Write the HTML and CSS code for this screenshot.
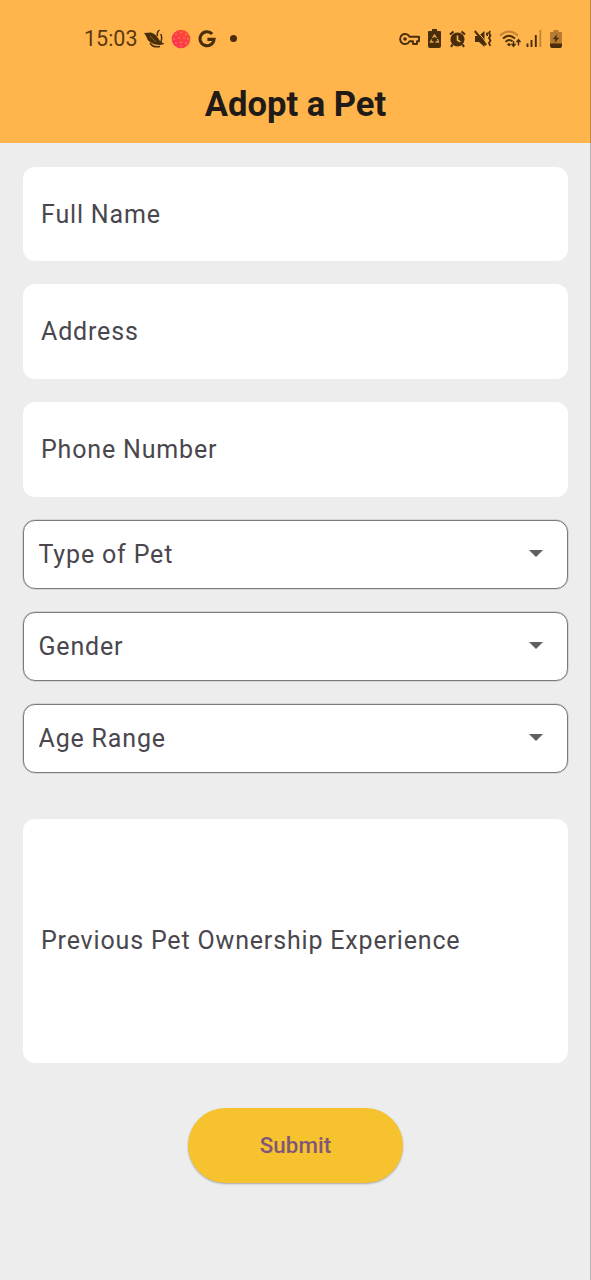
FILE: index.html
```html
<!DOCTYPE html>
<html lang="en">
<head>
<meta charset="utf-8">
<title>Adopt a Pet</title>
<link rel="stylesheet" href="styles.css">
</head>
<body>
<div class="screen">
  <header class="app-header">
    <div class="status-bar">
      <div class="status-left">
        <span class="clock">15:03</span>
        <svg class="icon-bird" width="22" height="22" viewBox="0 0 22 22"><path fill="#4a2e0b" d="M0 5 L7 4.5 Q12 6 14 10 L16 13 L20.5 16 L16 17 Q10 17 6 14 Q3 12 2.5 9 Q1.5 7 0 5Z"/><path d="M15.5 2 Q12.5 4 13.5 8 M17 6 Q18.5 10 17 14 M6 15 Q9 20 16 18.5" fill="none" stroke="#4a2e0b" stroke-width="1.5"/><path d="M6 8 L12 14" stroke="#a06c2b" stroke-width=".8"/></svg>
        <svg class="icon-ball" width="20" height="20" viewBox="0 0 20 20"><defs><linearGradient id="ball" x1="0" y1="1" x2="1" y2="0"><stop offset="0" stop-color="#fb2e58"/><stop offset="1" stop-color="#fb5030"/></linearGradient></defs><circle cx="10" cy="10" r="9.3" fill="url(#ball)"/><g fill="#ff8d50"><circle cx="10" cy="3.5" r=".8"/><circle cx="5" cy="5.5" r=".8"/><circle cx="15" cy="5.5" r=".8"/><circle cx="3" cy="10" r=".8"/><circle cx="8" cy="9" r=".8"/><circle cx="13" cy="9" r=".8"/><circle cx="17" cy="10" r=".8"/><circle cx="5" cy="14" r=".8"/><circle cx="10" cy="13.5" r=".8"/><circle cx="15" cy="14" r=".8"/><circle cx="10" cy="17" r=".8"/></g></svg>
        <svg class="icon-g" width="18" height="18" viewBox="0 0 18 18"><path d="M14.2 4 A7 7 0 1 0 16 9.4 H9.4" fill="none" stroke="#4a2e0b" stroke-width="3.1"/></svg>
        <span class="dot"></span>
      </div>
      <div class="status-right">
        <svg width="21" height="14" viewBox="0 0 21 14"><path d="M10.6 4.8 A5 5 0 1 0 10.6 9.2 H14 V12 H18 V9.2 H20 V4.8Z" fill="none" stroke="#4a2e0b" stroke-width="1.9" stroke-linejoin="round"/><circle cx="6" cy="7" r="1.8" fill="#4a2e0b"/></svg>
        <svg width="13" height="19" viewBox="0 0 13 19"><path d="M4 0 H9 V2 H12 Q13 2 13 3 V17 Q13 19 11 19 H2 Q0 19 0 17 V3 Q0 2 1 2 H4Z" fill="#4a2e0b"/><path d="M4.5 9 L6.5 6 L8.5 9 M9.5 10 L10.5 13 H7.5 M5.5 13 H2.5 L3.7 10.5" fill="none" stroke="#e3a34a" stroke-width="1.3"/></svg>
        <svg width="17" height="18" viewBox="0 0 17 18"><circle cx="8.5" cy="9.5" r="7" fill="#4a2e0b"/><path d="M1 4.5 L4.5 1.5 M12.5 1.5 L16 4.5 M3.5 14.5 L2 16.8 M13.5 14.5 L15 16.8" stroke="#4a2e0b" stroke-width="2.2"/><path d="M8.5 5.5 V10 L11.3 11.8" fill="none" stroke="#ffb54c" stroke-width="1.6"/></svg>
        <svg width="18" height="18" viewBox="0 0 18 18"><path d="M1 6 H4.5 L10.5 1 V17 L5 12 H1Z" fill="#4a2e0b"/><path d="M2.2 0 L12 12" stroke="#ffb54c" stroke-width="1"/><path d="M.8 1 L12.2 15" stroke="#4a2e0b" stroke-width="2"/><path d="M13.4 2.5 L12.8 4 L13.6 6 M16.2 1 L15 3 L16.5 5.5 L15 8 L16.5 10.5 L15 13 L16.3 16" fill="none" stroke="#4a2e0b" stroke-width="1.8"/></svg>
        <svg class="icon-wifi" width="24" height="20" viewBox="0 0 24 20"><path d="M1 6.5 Q10 -1.5 19 6.5" fill="none" stroke="#c48434" stroke-width="1.9"/><path d="M4 9.5 Q10 3.8 16 9.5 M6.5 12.8 Q10 9.3 13.5 12.2" fill="none" stroke="#4a2e0b" stroke-width="1.9"/><circle cx="10" cy="15.5" r="1.6" fill="#4a2e0b"/><path d="M14.5 12 V17 M12.5 14.8 L14.5 17.3 L16.5 14.8 M19.5 16.5 V11 M17.5 13.2 L19.5 10.7 L21.5 13.2" fill="none" stroke="#4a2e0b" stroke-width="1.4"/></svg>
        <svg class="icon-signal" width="16" height="17" viewBox="0 0 16 17"><path d="M1.5 13.5 V17 M5.5 10 V17 M9.8 5 V17" stroke="#4a2e0b" stroke-width="1.9"/><path d="M14.3 0 V17" stroke="#c48434" stroke-width="1.9"/></svg>
        <svg class="icon-battery" width="12" height="18" viewBox="0 0 12 18"><path d="M3.5 0 H8.5 V2 H11 Q12 2 12 3 V14 H0 V3 Q0 2 1 2 H3.5Z" fill="#b77b31"/><path d="M0 13.5 H12 V16 Q12 18 10 18 H2 Q0 18 0 16Z M7 4 L2.8 9.3 H5.5 L4.6 13 L9.2 7.8 H6.4Z" fill="#4a2e0b"/></svg>
      </div>
    </div>
    <h1 class="title">Adopt a Pet</h1>
  </header>
  <form class="form">
    <div class="field">Full Name</div>
    <div class="field">Address</div>
    <div class="field">Phone Number</div>
    <div class="select"><span>Type of Pet</span><i class="caret"></i></div>
    <div class="select"><span>Gender</span><i class="caret"></i></div>
    <div class="select"><span>Age Range</span><i class="caret"></i></div>
    <div class="field field-large">Previous Pet Ownership Experience</div>
    <button class="submit" type="button">Submit</button>
  </form>
</div>
</body>
</html>
```
FILE: styles.css
```css
* { box-sizing: border-box; }
body { margin: 0; background: #ededed; font-family: Roboto, sans-serif; }
.screen { position: relative; width: 591px; height: 1280px; overflow: hidden; }
/* thin edge along the right side of the screen */
.screen::after { content: ""; position: absolute; top: 0; right: 0; width: 1px; height: 100%; background: rgba(0, 0, 0, .24); }
.app-header { height: 143.3px; background: #ffb54c; }
.status-bar { display: flex; justify-content: space-between; height: 77px; padding: 0 29px 0 84px; }
.status-left, .status-right { display: flex; align-items: center; }
.status-bar svg { display: block; flex: none; }
.clock { width: 54px; font-size: 21.5px; color: #5a390f; }
.icon-bird { margin-left: 6px; }
.icon-ball { margin-left: 5px; }
.icon-g { margin-left: 7px; }
.dot { width: 7px; height: 7px; margin-left: 14px; border-radius: 50%; background: #4a2e0b; }
.status-right { gap: 8px; }
.status-right svg:nth-child(-n+4) { position: relative; left: 1px; }
.icon-signal { margin-left: -5px; }
.title { margin: 0; padding-top: 6px; font-size: 34.6px; line-height: 42px; font-weight: 700; text-align: center; color: #211b17; }
.form { display: flex; flex-direction: column; gap: 23px; padding: 23.7px 23px 0; color: #49474d; font-size: 25px; letter-spacing: .83px; }
.field { display: flex; align-items: center; height: 94.5px; padding: 0 18px; border-radius: 12px; background: #fff; }
.field:nth-child(3) { height: 95px; }
.select { display: flex; align-items: center; justify-content: space-between; height: 69px; padding: 0 24.5px 0 14.5px; border: 1.5px solid #7b7a7e; border-radius: 12px; background: #fff; box-shadow: 0 0 0 .5px rgba(123, 122, 126, .4); }
.caret { margin-top: -2px; border: 7.5px solid transparent; border-top-color: #5f5f5f; border-bottom: 0; }
.form .field-large { height: 244px; margin-top: 22.9px; }
.submit { align-self: center; width: 215px; height: 75px; margin-top: 22.4px; padding: 0 0 1px; border: 0; border-radius: 38px; background: #f6c32f; box-shadow: 0 1px 2px rgba(0, 0, 0, .3); color: #805679; font: 500 22.3px Roboto, sans-serif; letter-spacing: .1px; }
```
